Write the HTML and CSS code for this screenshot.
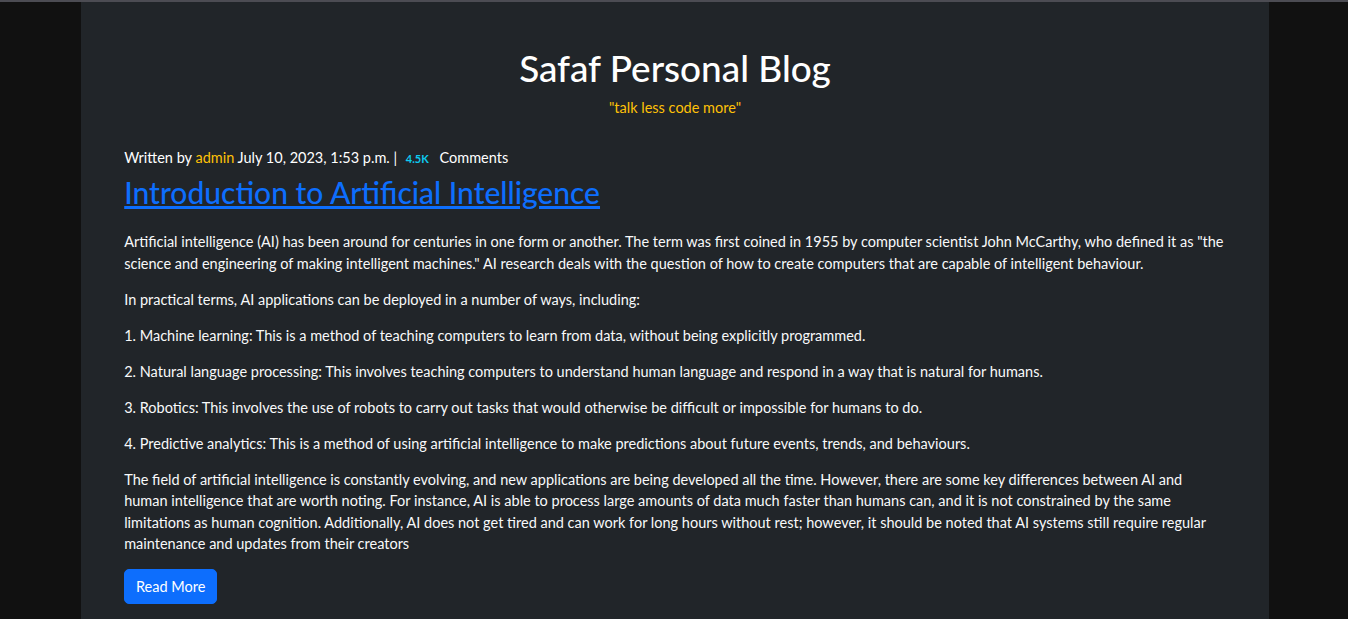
FILE: index.html
```html
<!DOCTYPE html>
<html lang="en">
<head>
<meta charset="utf-8">
<title>Safaf Personal Blog</title>
<link rel="stylesheet" href="styles.css">
</head>
<body class="page">
<div class="topline"></div>
<main class="container">
  <header class="blog-header">
    <h1 class="blog-title">Safaf Personal Blog</h1>
    <p class="blog-motto">"talk less code more"</p>
  </header>
  <article class="post">
    <p class="post-meta">Written by <a class="author" href="#">admin</a> July 10, 2023, 1:53 p.m. <span class="sep">|</span> <span class="badge">4.5K</span> Comments</p>
    <h2 class="post-title"><a href="#">Introduction to Artificial Intelligence</a></h2>
    <div class="post-body">
      <p>Artificial intelligence (AI) has been around for centuries in one form or another. The term was first coined in 1955 by computer scientist John McCarthy, who defined it as "the science and engineering of making intelligent machines." AI research deals with the question of how to create computers that are capable of intelligent behaviour.</p>
      <p>In practical terms, AI applications can be deployed in a number of ways, including:</p>
      <p>1. Machine learning: This is a method of teaching computers to learn from data, without being explicitly programmed.</p>
      <p>2. Natural language processing: This involves teaching computers to understand human language and respond in a way that is natural for humans.</p>
      <p>3. Robotics: This involves the use of robots to carry out tasks that would otherwise be difficult or impossible for humans to do.</p>
      <p>4. Predictive analytics: This is a method of using artificial intelligence to make predictions about future events, trends, and behaviours.</p>
      <p>The field of artificial intelligence is constantly evolving, and new applications are being developed all the time. However, there are some key differences between AI and human intelligence that are worth noting. For instance, AI is able to process large amounts of data much faster than humans can, and it is not constrained by the same limitations as human cognition. Additionally, AI does not get tired and can work for long hours without rest; however, it should be noted that AI systems still require regular maintenance and updates from their creators</p>
    </div>
    <a class="btn-primary" href="#">Read More</a>
  </article>
</main>
</body>
</html>
```
FILE: styles.css
```css
html, body { margin: 0; padding: 0; }
.page {
  background: #111111;
  font-family: Lato, "Noto Sans", sans-serif;
  font-size: 14.5px;
  line-height: 21.6px;
  color: #f8f9fa;
  min-height: 100vh;
}
.topline { height: 2px; background: #4c4c53; }
.container {
  width: 1188px;
  margin-left: calc(50% - 593px);
  box-sizing: border-box;
  background: #212529;
  padding: 44.6px 43.2px 40px;
  min-height: calc(100vh - 2px);
}
.blog-header { text-align: center; }
.blog-title {
  margin: 0 0 7.2px;
  font-size: 36.9px;
  line-height: 43.2px;
  font-weight: 500;
  color: #fff;
}
.blog-motto { margin: 0; color: #ffc107; }
.post { margin-top: 28.6px; }
.post-meta { margin: 0; color: #fff; }
.author { color: #ffc107; text-decoration: none; }
.badge {
  display: inline-block;
  font-size: 11px;
  font-weight: 700;
  line-height: 1;
  color: #0dcaf0;
  padding: 4px 7px 4px 5px;
}
.post-title {
  margin: 6.7px 0 21px;
  font-size: 30px;
  line-height: 34.6px;
  font-weight: 500;
}
.post-title a { color: #0d6efd; text-decoration: underline; }
.post-body p { margin: 0 0 14.4px; }
.btn-primary {
  display: inline-block;
  background: #0d6efd;
  color: #fff;
  text-decoration: none;
  border: 1px solid #0d6efd;
  border-radius: 5px;
  padding: 5.4px 10.8px;
  line-height: 21.6px;
}
```
